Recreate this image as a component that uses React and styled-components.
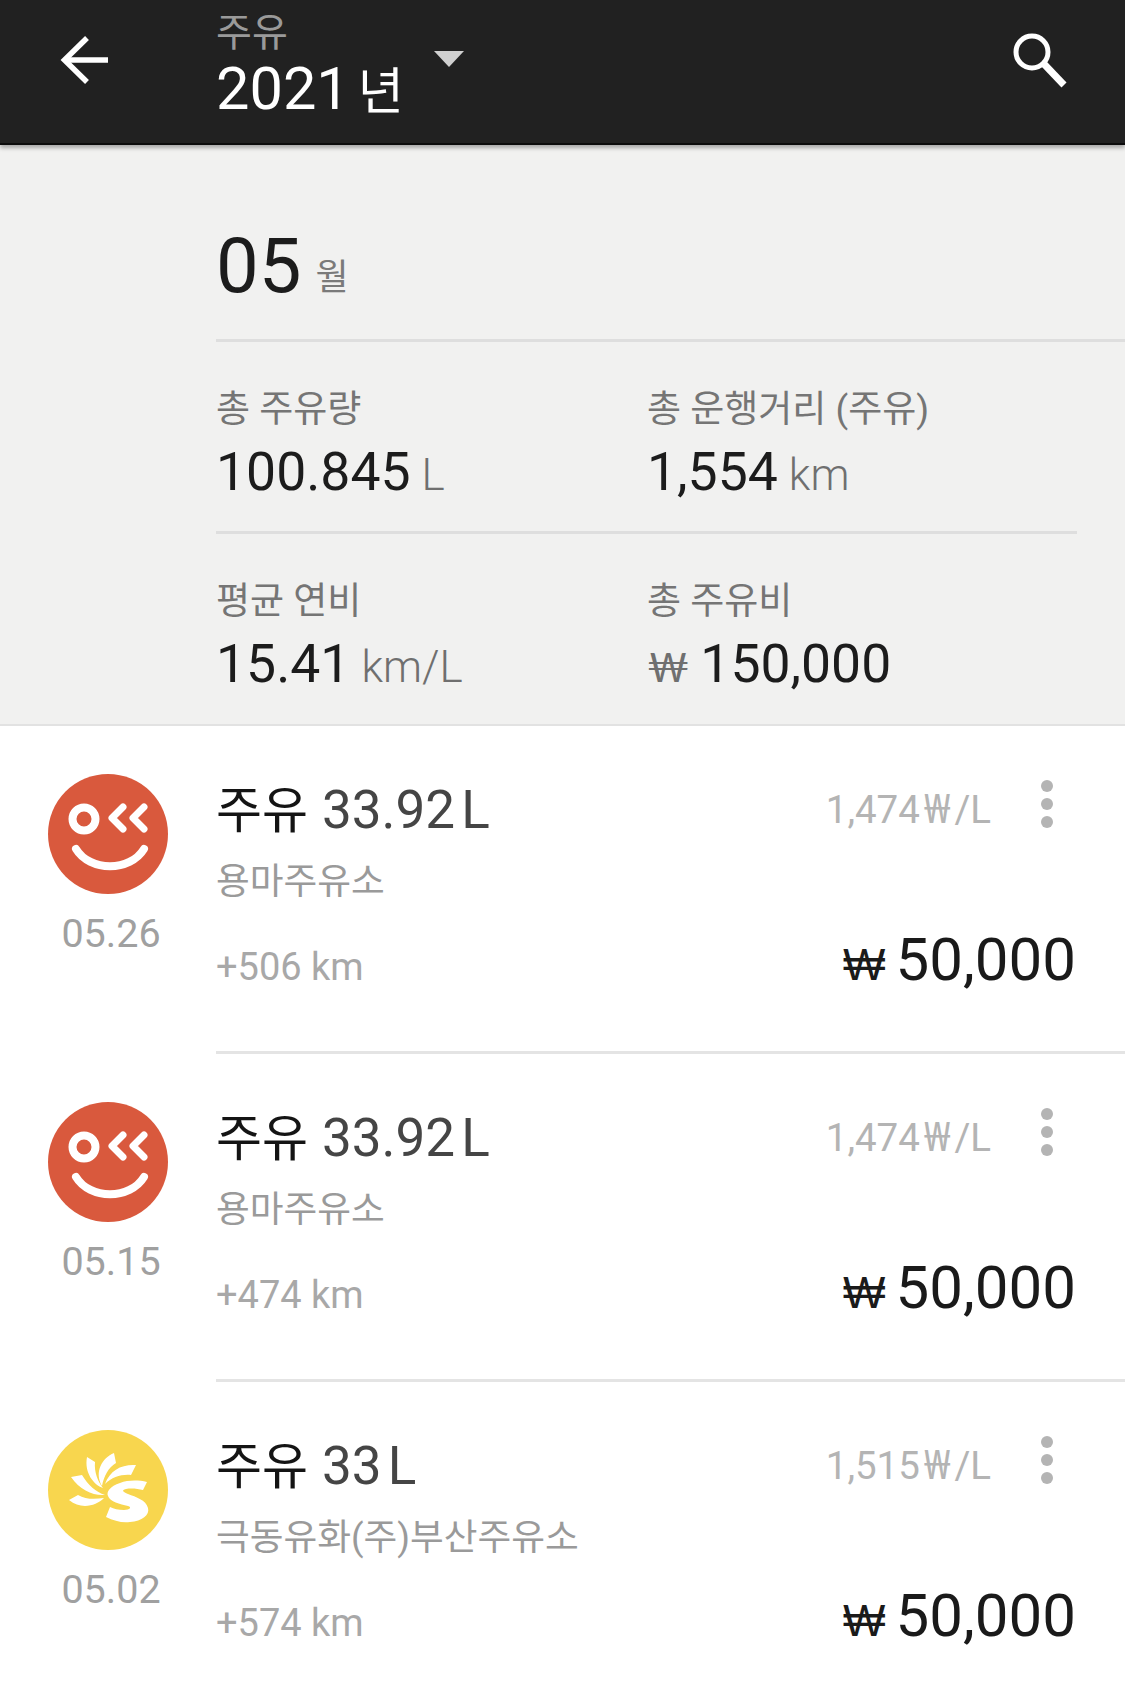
import React from 'react';
import styled, { createGlobalStyle } from 'styled-components';

const GlobalStyle = createGlobalStyle`
  html, body {
    margin: 0;
    padding: 0;
    background: #fff;
    height: 1702px;
    overflow: hidden;
  }
  body {
    font-family: Roboto, "Noto Sans CJK KR", sans-serif;
  }
`;

const Page = styled.div`
  width: 1125px;
  height: 1702px;
  overflow: hidden;
  background: #fff;
`;

// Top bar
const Header = styled.header`
  position: relative;
  z-index: 1;
  box-sizing: border-box;
  height: 145px;
  display: flex;
  align-items: flex-start;
  background: #212121;
  border-bottom: 2px solid #0c0c0c;
  box-shadow: 0 3px 4px rgba(0, 0, 0, 0.3);
`;

const BackButton = styled.div`
  width: 216px;
  flex-shrink: 0;
  padding: 35px 0 0 60px;
  box-sizing: border-box;
`;

const TitleBlock = styled.div`
  display: flex;
  flex-direction: column;
  padding-top: 10px;
`;

const HeaderLabel = styled.div`
  font-size: 39px;
  line-height: 46px;
  color: #9a9a9a;
`;

const YearRow = styled.div`
  display: flex;
  align-items: baseline;
  gap: 8px;
  margin-top: 2px;
  color: #fff;
  font-size: 59.5px;
  line-height: 62px;
`;

const YearUnit = styled.span`
  font-size: 50px;
`;

const Caret = styled.div`
  width: 0;
  height: 0;
  margin: 51px 0 0 30px;
  border-left: 15px solid transparent;
  border-right: 15px solid transparent;
  border-top: 16px solid #d0d0d0;
`;

const SearchButton = styled.div`
  margin-left: auto;
  padding: 33px 55px 0 0;
`;

// Monthly summary
const Summary = styled.section`
  box-sizing: border-box;
  height: 581px;
  padding: 77px 0 0 216px;
  background: #f1f1f0;
  border-bottom: 2px solid #e2e2e2;
`;

const MonthRow = styled.div`
  display: flex;
  align-items: flex-start;
  gap: 14px;
  height: 117px;
  color: #1c1c1c;
  font-size: 76px;
  line-height: 88px;
`;

const MonthUnit = styled.span`
  margin-top: 35px;
  font-size: 36px;
  line-height: 42px;
  color: #7a7a7a;
`;

const Divider = styled.div`
  height: 3px;
  background: #dedede;
  margin-right: ${(p) => p.$inset || 0}px;
`;

const StatGrid = styled.div`
  display: grid;
  grid-template-columns: 431px 1fr;
  padding-top: 46px;
  height: 143px;
`;

const Stat = styled.div`
  display: flex;
  flex-direction: column;
`;

const StatLabel = styled.div`
  font-size: 37px;
  line-height: 44px;
  color: #757575;
`;

const StatValue = styled.div`
  display: flex;
  align-items: baseline;
  gap: 11px;
  margin-top: 8px;
  font-size: 53.5px;
  line-height: 64px;
  color: #1c1c1c;
`;

const StatUnit = styled.span`
  font-size: 44px;
  font-weight: 300;
  color: #6f6f6f;
`;

const StatSign = styled.span`
  font-family: Lato, sans-serif;
  font-size: 40px;
  font-weight: 400;
  color: #6f6f6f;
`;

// Fuel records
const List = styled.div`
  display: flex;
  flex-direction: column;
`;

const Row = styled.article`
  box-sizing: border-box;
  height: 328px;
  display: flex;
  padding-top: 48px;
`;

const DateColumn = styled.div`
  width: 216px;
  flex-shrink: 0;
  padding-left: 48px;
  box-sizing: border-box;
`;

const Logo = styled.div`
  width: 120px;
  height: 120px;
  border-radius: 50%;
  overflow: hidden;
  background: ${(p) => p.$color};
`;

const DateText = styled.div`
  width: 126px;
  margin-top: 18px;
  text-align: center;
  font-size: 39.5px;
  line-height: 44px;
  color: #a0a0a0;
`;

const RowBody = styled.div`
  flex: 1;
  display: flex;
  flex-direction: column;
  height: 100%;
  box-sizing: border-box;
  border-bottom: ${(p) => (p.$last ? 'none' : '3px solid #e4e4e4')};
`;

const TopLine = styled.div`
  display: flex;
  align-items: flex-start;
  height: 62px;
`;

const Title = styled.div`
  display: flex;
  align-items: baseline;
  gap: 14px;
  font-size: 53px;
  line-height: 73px;
  color: #454545;
  word-spacing: -7px;
`;

const TitleWord = styled.span`
  font-size: 50px;
  color: #141414;
`;

const UnitPrice = styled.div`
  margin-left: auto;
  font-size: 38.5px;
  line-height: 69px;
  color: #b4b4b4;
`;

const UnitSign = styled.span`
  margin: 0 4px;
  font-family: "Noto Sans", sans-serif;
  font-size: 39.5px;
`;

const MoreDots = styled.div`
  display: flex;
  flex-direction: column;
  gap: 6px;
  flex-shrink: 0;
  width: 12px;
  margin: 6px 72px 0 50px;
`;

const Dot = styled.span`
  width: 12px;
  height: 12px;
  border-radius: 50%;
  background: #b4b4b4;
`;

const Station = styled.div`
  font-size: 36.7px;
  line-height: 44px;
  margin-top: 24px;
  color: #9a9a9a;
`;

const BottomLine = styled.div`
  display: flex;
  align-items: baseline;
  justify-content: space-between;
  margin-top: 32px;
  padding-right: 49px;
`;

const Distance = styled.div`
  font-size: 38px;
  line-height: 48px;
  color: #a8a8a8;
`;

const Price = styled.div`
  font-size: 60px;
  line-height: 48px;
  color: #1a1a1a;
`;

const PriceSign = styled.span`
  margin-right: 10px;
  font-family: "Open Sans", sans-serif;
  font-size: 45px;
`;

const BackIcon = () => (
  <svg width="50" height="50" viewBox="0 0 50 50" fill="none" stroke="#fff" strokeWidth="5.5">
    <path d="M48 25H4" />
    <path d="M27 3L4.5 25L27 47" />
  </svg>
);

const SearchIcon = () => (
  <svg width="57" height="57" viewBox="0 0 57 57" fill="none" stroke="#fff">
    <circle cx="19" cy="19" r="16" strokeWidth="5" />
    <path d="M31 31L51 52" strokeWidth="7" />
  </svg>
);

const SmileLogo = () => (
  <svg width="120" height="120" viewBox="0 0 120 120" fill="none" stroke="#fff" strokeLinecap="round" strokeLinejoin="round">
    <circle cx="36" cy="45" r="11.5" strokeWidth="8" />
    <path d="M75 33L64 44L75 55" strokeWidth="7" />
    <path d="M96 33L85 44L96 55" strokeWidth="7" />
    <path d="M28 75C42 98 82 98 96 75" strokeWidth="8" />
  </svg>
);

const SunLogo = () => (
  <svg width="120" height="120" viewBox="0 0 120 120" fill="#fff">
    <path d="M21 70L30 65C38 70 48 69 56 68C48 76 33 80 21 70Z" />
    <path d="M23 47L34 45C40 55 48 62 57 65C45 66 32 60 23 47Z" />
    <path d="M39 27L47 32C46 42 50 52 55 58C46 55 36 43 39 27Z" />
    <path d="M66 23C54 28 46 42 54 56C56 46 60 38 68 33Z" />
    <path d="M57 54C62 40 74 34 88 35L83 45C74 44 64 47 57 54Z" />
    <path d="M99 52C90 50 80 50 72 53C62 56 58 62 60 66C62 72 72 74 80 76C84 77 82 80 76 80C70 80 66 79 62 77L58 87C66 91 74 93 82 92C94 91 102 85 100 78C98 70 88 67 80 64C75 62 73 60 78 59C84 58 90 59 95 60Z" />
  </svg>
);

const stats = [
  [
    { label: '총 주유량', value: '100.845', unit: 'L' },
    { label: '총 운행거리 (주유)', value: '1,554', unit: 'km' },
  ],
  [
    { label: '평균 연비', value: '15.41', unit: 'km/L' },
    { label: '총 주유비', value: '150,000', sign: true },
  ],
];

const records = [
  { date: '05.26', liters: '33.92', station: '용마주유소', distance: '+506', unitPrice: '1,474', color: '#d9593d', logo: <SmileLogo /> },
  { date: '05.15', liters: '33.92', station: '용마주유소', distance: '+474', unitPrice: '1,474', color: '#d9593d', logo: <SmileLogo /> },
  { date: '05.02', liters: '33', station: '극동유화(주)부산주유소', distance: '+574', unitPrice: '1,515', color: '#f8d64e', logo: <SunLogo /> },
];

const App = () => (
  <Page>
    <GlobalStyle />
    <Header>
      <BackButton><BackIcon /></BackButton>
      <TitleBlock>
        <HeaderLabel>주유</HeaderLabel>
        <YearRow>2021<YearUnit>년</YearUnit></YearRow>
      </TitleBlock>
      <Caret />
      <SearchButton><SearchIcon /></SearchButton>
    </Header>

    <Summary>
      <MonthRow>05<MonthUnit>월</MonthUnit></MonthRow>
      <Divider />
      {stats.map((line, i) => (
        <React.Fragment key={i}>
          <StatGrid>
            {line.map((stat) => (
              <Stat key={stat.label}>
                <StatLabel>{stat.label}</StatLabel>
                <StatValue>
                  {stat.sign && <StatSign>₩</StatSign>}
                  {stat.value}
                  {stat.unit && <StatUnit>{stat.unit}</StatUnit>}
                </StatValue>
              </Stat>
            ))}
          </StatGrid>
          {i === 0 && <Divider $inset={48} />}
        </React.Fragment>
      ))}
    </Summary>

    <List>
      {records.map((record, i) => (
        <Row key={record.date}>
          <DateColumn>
            <Logo $color={record.color}>{record.logo}</Logo>
            <DateText>{record.date}</DateText>
          </DateColumn>
          <RowBody $last={i === records.length - 1}>
            <TopLine>
              <Title><TitleWord>주유</TitleWord><span>{record.liters} L</span></Title>
              <UnitPrice>{record.unitPrice}<UnitSign>₩</UnitSign>/L</UnitPrice>
              <MoreDots><Dot /><Dot /><Dot /></MoreDots>
            </TopLine>
            <Station>{record.station}</Station>
            <BottomLine>
              <Distance>{record.distance} km</Distance>
              <Price><PriceSign>₩</PriceSign>50,000</Price>
            </BottomLine>
          </RowBody>
        </Row>
      ))}
    </List>
  </Page>
);

export default App;
